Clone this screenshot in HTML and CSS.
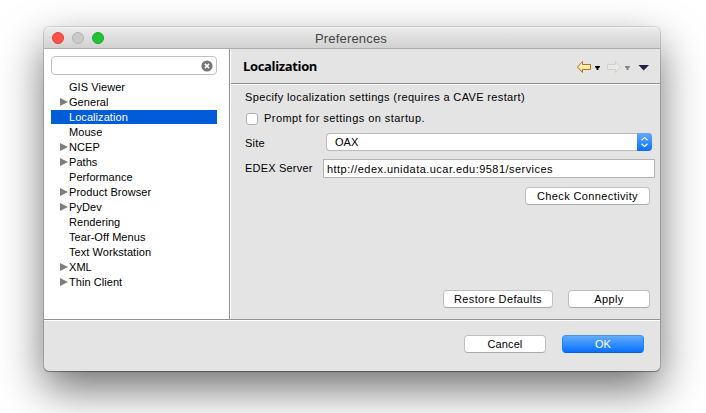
FILE: index.html
```html
<!DOCTYPE html>
<html lang="en">
<head>
<meta charset="utf-8">
<title>Preferences</title>
<link rel="stylesheet" href="styles.css">
</head>
<body>
<div class="window">
  <header class="titlebar">
    <div class="lights"><i class="light close"></i><i class="light minimize"></i><i class="light maximize"></i></div>
    <span class="title">Preferences</span>
  </header>
  <div class="main">
    <aside class="sidebar">
      <div class="search">
        <svg width="12" height="12" viewBox="0 0 12 12"><circle cx="6" cy="6" r="5.6" fill="#777"/><path d="M3.9 3.9l4.2 4.2M8.1 3.9L3.9 8.1" stroke="#fff" stroke-width="1.6"/></svg>
      </div>
      <ul class="tree">
        <li><span>GIS Viewer</span></li>
        <li class="branch"><span>General</span></li>
        <li class="selected"><span>Localization</span></li>
        <li><span>Mouse</span></li>
        <li class="branch"><span>NCEP</span></li>
        <li class="branch"><span>Paths</span></li>
        <li><span>Performance</span></li>
        <li class="branch"><span>Product Browser</span></li>
        <li class="branch"><span>PyDev</span></li>
        <li><span>Rendering</span></li>
        <li><span>Tear-Off Menus</span></li>
        <li><span>Text Workstation</span></li>
        <li class="branch"><span>XML</span></li>
        <li class="branch"><span>Thin Client</span></li>
      </ul>
    </aside>
    <section class="page">
      <div class="page-head">
        <h1>Localization</h1>
        <svg class="nav" width="76" height="14" viewBox="0 0 76 14">
          <defs><linearGradient id="gold" x1="0" y1="0" x2="0" y2="1"><stop offset="0" stop-color="#fffbe0"/><stop offset="1" stop-color="#fbd978"/></linearGradient></defs>
          <path d="M1.500 7L6.500 1.500V4.500H14.500V9.500H6.500V12.500Z" fill="url(#gold)" stroke="#b0741c"/>
          <path d="M19 6h5v1h-.5v1h-1v2h-2V8h-1V7h-.5z" fill="#000"/>
          <path d="M44.500 7L39.500 1.500V4.500H31.500V9.500H39.500V12.500Z" fill="#e9e9e7" stroke="#d0d0cd"/>
          <path d="M49 6h5v1h-.5v1h-1v2h-2V8h-1V7h-.5z" fill="#858585"/>
          <path d="M62.500 5H73L67.700 10.500Z" fill="#292047"/>
        </svg>
      </div>
      <div class="page-body">
        <p class="intro">Specify localization settings (requires a CAVE restart)</p>
        <div class="check"><i class="box"></i><span>Prompt for settings on startup.</span></div>
        <div class="row site">
          <span class="label">Site</span>
          <div class="select"><span>OAX</span>
            <div class="stepper"><svg width="15" height="18" viewBox="0 0 15 18"><path d="M4.500 7.200L7.500 4.600L10.500 7.200M4.500 10.800L7.500 13.400L10.500 10.800" fill="none" stroke="#fff" stroke-width="1.300"/></svg></div>
          </div>
        </div>
        <div class="row server">
          <span class="label">EDEX Server</span>
          <div class="field">http://edex.unidata.ucar.edu:9581/services</div>
        </div>
        <div class="connect"><div class="button check-button">Check Connectivity</div></div>
        <div class="page-actions"><div class="button restore">Restore Defaults</div><div class="button apply">Apply</div></div>
      </div>
    </section>
  </div>
  <footer class="footer"><div class="button cancel">Cancel</div><div class="button ok">OK</div></footer>
</div>
</body>
</html>
```
FILE: styles.css
```css
* { box-sizing: border-box; }
html, body { height: 100%; overflow: hidden; }
body {
  margin: 0;
  padding: 27px 46px 42px 44px;
  background: #fff;
  font: 11px/15px "Liberation Sans", Arial, sans-serif;
  color: #000;
}
.window {
  display: flex;
  flex-direction: column;
  width: 616px;
  height: 344px;
  border-radius: 5px;
  overflow: hidden;
  background: #e4e4e4;
  box-shadow: 0 0 0 1px rgba(0,0,0,.13), 0 1px 1px rgba(0,0,0,.3), 0 18px 44px rgba(0,0,0,.56);
}
.titlebar {
  display: flex;
  align-items: center;
  height: 22px;
  flex: none;
  border-bottom: 1px solid #acacac;
  border-top: 1px solid #f4f4f4;
  background: linear-gradient(#ebebeb, #d1d1d1);
}
.lights { display: flex; gap: 8px; width: 130px; padding-left: 8px; }
.light { width: 12px; height: 12px; border-radius: 50%; border: 1px solid; }
.close { background: #ff5148; border-color: #e33e37; }
.minimize { background: #cacaca; border-color: #b4b4b4; }
.maximize { background: #22c138; border-color: #12ac28; }
.title { flex: 1; padding-right: 132px; text-align: center; font-size: 13px; color: #444; letter-spacing: .17px; }
.main { display: flex; height: 270px; flex: none; }
.sidebar { width: 186px; padding: 7px 0 0 7px; background: #fff; border-right: 1px solid #929292; }
.search {
  display: flex;
  align-items: center;
  justify-content: flex-end;
  width: 166px;
  height: 19px;
  padding-right: 3px;
  border: 1px solid #c0c0c0;
  border-radius: 4px;
}
.tree { list-style: none; margin: 5px 0 0; padding: 0; }
.tree li { display: flex; align-items: center; width: 166px; height: 14px; margin-bottom: 1px; padding-left: 18px; letter-spacing: .06px; }
.branch::before {
  content: "";
  width: 0;
  margin-left: -9px;
  margin-right: 1px;
  border: solid transparent;
  border-width: 4.500px 0 4.500px 8px;
  border-left-color: #7e7e7e;
}
.tree .selected { background: #005cd9; color: #fff; }
.page { flex: 1; border-left: 1px solid #fff; }
.page-head {
  display: flex;
  align-items: center;
  justify-content: space-between;
  height: 36px;
  padding: 0 8px 0 12px;
  border-bottom: 1px solid #fff;
  box-shadow: inset 0 -1px #929292;
}
h1 { margin: 0; font: bold 13px/16px "Open Sans", sans-serif; letter-spacing: -.35px; position: relative; top: -1px; }
.page-body { display: flex; flex-direction: column; height: 234px; padding: 5px 0 0 14px; letter-spacing: .28px; }
.intro { margin: 0; letter-spacing: .36px; }
.check { display: flex; align-items: center; gap: 6px; height: 15px; margin: 6px 0 0 1px; letter-spacing: .44px; }
.box { width: 12px; height: 12px; border: 1px solid #b0b0b0; border-radius: 3px; background: #fff; }
.row { display: flex; align-items: center; }
.label { flex: none; letter-spacing: .2px; }
.site { height: 18px; margin-top: 7px; }
.site .label { width: 81px; padding-top: 2px; }
.select {
  display: flex;
  align-items: center;
  justify-content: space-between;
  width: 326px;
  height: 18px;
  padding-left: 8px;
  border: 1px solid #bababa;
  border-right: 0;
  border-radius: 4px;
  background: #fff;
  letter-spacing: 0;
}
.stepper { width: 15px; height: 18px; border-radius: 0 4px 4px 0; background: linear-gradient(#61aafb, #0870ff); }
.stepper svg { display: block; }
.server { height: 19px; margin-top: 8px; }
.server .label { width: 78px; }
.field { width: 332px; height: 19px; padding-left: 3px; border: 1px solid #b3b3b3; background: #fff; line-height: 18px; letter-spacing: .46px; }
.button {
  height: 18px;
  border: 1px solid #c0c0c0;
  border-bottom-color: #a9a9a9;
  border-radius: 4px;
  background: #fff;
  text-align: center;
  line-height: 16px;
  letter-spacing: .38px;
}
.connect { display: flex; justify-content: flex-end; margin-top: 9px; padding-right: 10px; }
.check-button { width: 125px; }
.page-actions { display: flex; justify-content: flex-end; gap: 15px; margin: auto 10px 11px 0; }
.restore { width: 110px; }
.apply { width: 82px; }
.footer {
  display: flex;
  justify-content: flex-end;
  flex: 1;
  gap: 16px;
  padding: 15px 16px 0 0;
  border-top: 1px solid #929292;
  box-shadow: inset 0 1px #fff;
}
.cancel, .ok { width: 82px; letter-spacing: .1px; }
.ok { color: #fff; background: linear-gradient(#62adfc, #0870ff); border-color: #4596ee #2583f7 #0b62e0; }
```
